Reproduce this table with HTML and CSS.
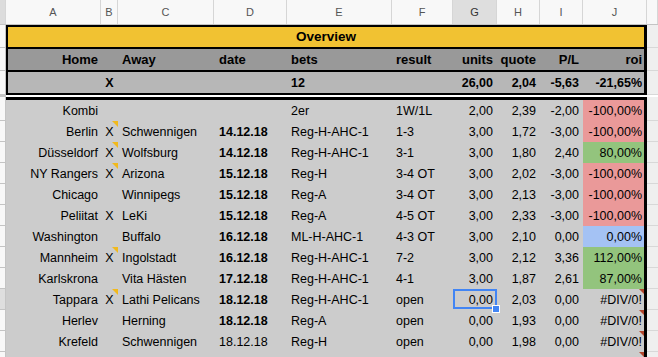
FILE: index.html
```html
<!DOCTYPE html>
<html lang="de">

<head>
  <meta charset="UTF-8">
  <meta name="viewport" content="width=device-width, initial-scale=1.0">
  <title>Overview</title>
  <link rel="stylesheet" href="styles.css">
</head>

<body>
  <div class="sheet">
    <!-- column letters -->
    <div class="letters">
      <div class="corner"></div>
      <div>A</div>
      <div>B</div>
      <div>C</div>
      <div>D</div>
      <div>E</div>
      <div>F</div>
      <div class="sel">G</div>
      <div>H</div>
      <div>I</div>
      <div>J</div>
      <div></div>
    </div>

    <!-- frozen summary block -->
    <div class="frozen">
      <div class="strip">
        <div></div>
        <div></div>
        <div></div>
      </div>
      <div class="summary">
        <div class="title">Overview</div>
        <div class="row heads">
          <div>Home</div>
          <div></div>
          <div>Away</div>
          <div>date</div>
          <div>bets</div>
          <div>result</div>
          <div>units</div>
          <div>quote</div>
          <div>P/L</div>
          <div>roi</div>
        </div>
        <div class="row totals">
          <div></div>
          <div>X</div>
          <div></div>
          <div></div>
          <div>12</div>
          <div></div>
          <div>26,00</div>
          <div>2,04</div>
          <div>-5,63</div>
          <div>-21,65%</div>
        </div>
      </div>
      <div class="strip spare">
        <div></div>
        <div></div>
        <div></div>
      </div>
    </div>

    <div class="divider">
      <div></div>
      <div></div>
    </div>

    <!-- bets -->
    <div class="body">
      <div class="strip">
        <div></div>
        <div></div>
        <div></div>
        <div></div>
        <div></div>
        <div></div>
        <div></div>
        <div></div>
        <div></div>
        <div class="cur"></div>
        <div></div>
        <div></div>
        <div></div>
      </div>
      <div class="bets">
        <div class="row">
          <div>Kombi</div>
          <div></div>
          <div></div>
          <div></div>
          <div>2er</div>
          <div>1W/1L</div>
          <div>2,00</div>
          <div>2,39</div>
          <div>-2,00</div>
          <div class="bad">-100,00%</div>
        </div>
        <div class="row">
          <div>Berlin</div>
          <div class="comment">X</div>
          <div>Schwennigen</div>
          <div>14.12.18</div>
          <div>Reg-H-AHC-1</div>
          <div>1-3</div>
          <div>3,00</div>
          <div>1,72</div>
          <div>-3,00</div>
          <div class="bad">-100,00%</div>
        </div>
        <div class="row">
          <div>Düsseldorf</div>
          <div class="comment">X</div>
          <div>Wolfsburg</div>
          <div>14.12.18</div>
          <div>Reg-H-AHC-1</div>
          <div>3-1</div>
          <div>3,00</div>
          <div>1,80</div>
          <div>2,40</div>
          <div class="good">80,00%</div>
        </div>
        <div class="row">
          <div>NY Rangers</div>
          <div class="comment">X</div>
          <div>Arizona</div>
          <div>15.12.18</div>
          <div>Reg-H</div>
          <div>3-4 OT</div>
          <div>3,00</div>
          <div>2,02</div>
          <div>-3,00</div>
          <div class="bad">-100,00%</div>
        </div>
        <div class="row">
          <div>Chicago</div>
          <div></div>
          <div>Winnipegs</div>
          <div>15.12.18</div>
          <div>Reg-A</div>
          <div>3-4 OT</div>
          <div>3,00</div>
          <div>2,13</div>
          <div>-3,00</div>
          <div class="bad">-100,00%</div>
        </div>
        <div class="row">
          <div>Peliitat</div>
          <div>X</div>
          <div>LeKi</div>
          <div>15.12.18</div>
          <div>Reg-A</div>
          <div>4-5 OT</div>
          <div>3,00</div>
          <div>2,33</div>
          <div>-3,00</div>
          <div class="bad">-100,00%</div>
        </div>
        <div class="row">
          <div>Washington</div>
          <div></div>
          <div>Buffalo</div>
          <div>16.12.18</div>
          <div>ML-H-AHC-1</div>
          <div>4-3 OT</div>
          <div>3,00</div>
          <div>2,10</div>
          <div>0,00</div>
          <div class="even">0,00%</div>
        </div>
        <div class="row">
          <div>Mannheim</div>
          <div class="comment">X</div>
          <div>Ingolstadt</div>
          <div>16.12.18</div>
          <div>Reg-H-AHC-1</div>
          <div>7-2</div>
          <div>3,00</div>
          <div>2,12</div>
          <div>3,36</div>
          <div class="good">112,00%</div>
        </div>
        <div class="row">
          <div>Karlskrona</div>
          <div></div>
          <div>Vita Hästen</div>
          <div>17.12.18</div>
          <div>Reg-H-AHC-1</div>
          <div>4-1</div>
          <div>3,00</div>
          <div>1,87</div>
          <div>2,61</div>
          <div class="good">87,00%</div>
        </div>
        <div class="row">
          <div>Tappara</div>
          <div class="comment">X</div>
          <div>Lathi Pelicans</div>
          <div>18.12.18</div>
          <div>Reg-H-AHC-1</div>
          <div>open</div>
          <div class="active">0,00</div>
          <div>2,03</div>
          <div>0,00</div>
          <div class="note">#DIV/0!</div>
        </div>
        <div class="row">
          <div>Herlev</div>
          <div></div>
          <div>Herning</div>
          <div>18.12.18</div>
          <div>Reg-A</div>
          <div>open</div>
          <div>0,00</div>
          <div>1,93</div>
          <div>0,00</div>
          <div class="note">#DIV/0!</div>
        </div>
        <div class="row">
          <div>Krefeld</div>
          <div></div>
          <div>Schwennigen</div>
          <div class="plain">18.12.18</div>
          <div>Reg-H</div>
          <div>open</div>
          <div>0,00</div>
          <div>1,98</div>
          <div>0,00</div>
          <div class="note">#DIV/0!</div>
        </div>
        <div class="row">
          <div></div>
          <div></div>
          <div></div>
          <div></div>
          <div></div>
          <div></div>
          <div></div>
          <div></div>
          <div></div>
          <div class="note"></div>
        </div>
      </div>
      <div class="spare"></div>
    </div>
  </div>
</body>

</html>
```

FILE: styles.css
```css
* {
  margin: 0;
  padding: 0;
  box-sizing: border-box;
}

body {
  font-family: "Liberation Sans", Arial, sans-serif;
  color: #000;
  background-color: #fff;
}

.sheet {
  width: 658px;
  height: 357px;
  overflow: hidden;
}

/* column letters */
.letters {
  display: grid;
  grid-template-columns: 6px 95px 17px 96px 73px 105px 61px 44px 43px 43px 64px 1fr;
  height: 25px;
  background-color: #f8f8f8;
  border-bottom: 1px solid #c4c4c4;
}

.letters div {
  display: flex;
  align-items: center;
  justify-content: center;
  font-size: 11px;
  color: #555;
  border-right: 1px solid #d6d6d6;
}

.letters .corner {
  background-color: #dcdcdc;
}

.letters .sel {
  background-color: #dedede;
  color: #333;
}

/* row number strip + right filler */
.strip div {
  background-color: #f8f8f8;
  border-bottom: 1px solid #c4c4c4;
  border-right: 1px solid #c4c4c4;
  height: 21px;
}

.strip div.cur {
  background-color: #dedede;
}

.strip.spare div {
  background-color: #efefef;
  border-right: 0;
  border-bottom-color: #d8d8d8;
}

.frozen .strip div:nth-child(1),
.frozen .strip div:nth-child(2) {
  height: 23px;
}

.frozen .strip div:nth-child(3) {
  height: 24px;
}

.body .strip div:first-child {
  height: 24px;
}

/* summary block */
.frozen {
  display: grid;
  grid-template-columns: 6px 641px 1fr;
}

.summary {
  border: 2px solid #000;
  border-right-width: 3px;
}

.title {
  height: 22px;
  line-height: 20px;
  background-color: #f1c232;
  border-bottom: 2px solid #000;
  text-align: center;
  font-size: 13.5px;
  font-weight: bold;
}

.row {
  display: grid;
  grid-template-columns: 95px 17px 96px 73px 105px 61px 44px 43px 43px 61px;
  height: 21px;
}

.summary .row {
  grid-template-columns: 93px 17px 96px 73px 105px 61px 44px 43px 43px 61px;
}

.row > div {
  display: flex;
  align-items: center;
  padding: 0 4px;
  white-space: nowrap;
  position: relative;
}

.row > div:nth-child(1) {
  justify-content: flex-end;
  padding-right: 3px;
}

.row > div:nth-child(2) {
  justify-content: center;
  padding: 0;
}

.row > div:nth-child(4) {
  padding-left: 5px;
}

.row > div:nth-child(n+7) {
  justify-content: flex-end;
}

.row > div:nth-child(10) {
  padding-right: 2px;
}

.heads {
  height: 23px;
  background-color: #999;
  border-bottom: 2px solid #000;
  font-size: 13px;
  font-weight: bold;
}

.totals {
  background-color: #b7b7b7;
  font-size: 12.5px;
  font-weight: bold;
}

.divider {
  display: grid;
  grid-template-columns: 6px 1fr;
  height: 2px;
}

.divider div:first-child {
  background-color: #c4c4c4;
}

/* bets */
.body {
  display: grid;
  grid-template-columns: 6px 641px 1fr;
}

.bets {
  border-top: 3px solid #000;
  border-right: 3px solid #000;
  background-color: #ccc;
  font-size: 12.5px;
}

.bets .row > div:nth-child(4) {
  font-weight: bold;
}

.bets .row > div.plain {
  font-weight: normal;
}

.body .spare {
  background: repeating-linear-gradient(#efefef 0 20px, #d8d8d8 20px 21px);
  background-position: 0 3px;
}

.bad {
  background-color: #ea9999;
}

.good {
  background-color: #93c47d;
}

.even {
  background-color: #a4c2f4;
}

/* corner markers */
.comment::after,
.note::after {
  content: "";
  position: absolute;
  top: 0;
  right: 0;
  border-top: 6px solid #f1b91c;
  border-left: 6px solid transparent;
}

.note::after {
  border-top: 5px solid #b0452c;
  border-left: 5px solid transparent;
}

/* selected cell */
.active::before {
  content: "";
  position: absolute;
  left: 0;
  top: 0;
  right: 0;
  bottom: 1px;
  border: 2px solid #4285f4;
}

.active::after {
  content: "";
  position: absolute;
  right: -2px;
  bottom: -2px;
  width: 6px;
  height: 6px;
  background-color: #4285f4;
  box-shadow: 0 0 0 1px #fff;
}
```
